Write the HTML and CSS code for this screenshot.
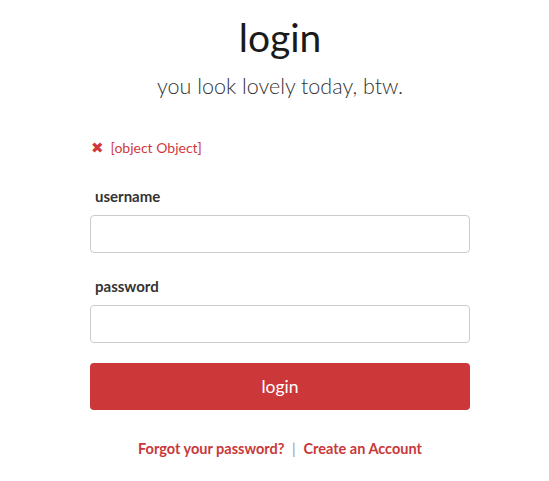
FILE: index.html
```html
<!DOCTYPE html>
<html lang="en">
<head>
    <meta charset="UTF-8">
    <meta name="viewport" content="width=device-width, initial-scale=1.0">
    <title>Login</title>
    <link rel="stylesheet" href="styles.css">
</head>
<body>
    <div class="page">
        <div class="login-box">
            <h1 class="title">login</h1>
            <p class="subtitle">you look lovely today, btw.</p>

            <div class="error">
                <span class="error-icon">&#10006;</span>
                <span>[object Object]</span>
            </div>

            <form class="login-form">
                <label for="username">username</label>
                <input type="text" id="username">

                <label for="password">password</label>
                <input type="password" id="password">

                <button type="submit">login</button>
            </form>

            <p class="links">
                <a href="#">Forgot your password?</a>
                <span class="sep">|</span>
                <a href="#">Create an Account</a>
            </p>
        </div>
    </div>
</body>
</html>
```

FILE: styles.css
```css
body {
    margin: 0;
    font-family: Lato, "Open Sans", sans-serif;
    color: #222;
    background: #fff;
}

.page {
    padding-left: 11px;
}

.login-box {
    width: 380px;
    margin: 0 auto;
}

.title {
    text-align: center;
    font-size: 39px;
    font-weight: 400;
    margin: 12px 0 0;
    line-height: 50px;
    color: #1a1a1a;
}

.subtitle {
    text-align: center;
    font-size: 21.5px;
    font-weight: 300;
    margin: 9px 0 0;
    line-height: 30px;
    color: #333;
}

.error {
    margin-top: 36px;
    color: #d0393b;
    font-size: 14px;
    line-height: 20px;
    padding-left: 1px;
}

.error-icon {
    font-size: 15px;
    margin-right: 3px;
}

.login-form {
    margin-top: 28px;
}

label {
    display: block;
    font-weight: bold;
    font-size: 15px;
    line-height: 20px;
    padding-left: 5px;
    color: #333;
    margin-bottom: 9px;
}

input[type="text"],
input[type="password"] {
    display: block;
    box-sizing: border-box;
    width: 100%;
    height: 38px;
    border: 1px solid #ccc;
    border-radius: 4px;
    margin-bottom: 23px;
    padding: 6px 12px;
    font-size: 15px;
}

button {
    display: block;
    width: 100%;
    height: 47px;
    margin-top: -3px;
    background-color: #cc3839;
    color: #fff;
    border: none;
    border-radius: 4px;
    font-family: inherit;
    font-size: 17.5px;
    cursor: pointer;
}

.links {
    text-align: center;
    margin: 29px 0 0;
    font-size: 14.5px;
    line-height: 20px;
}

.links a {
    color: #c9383a;
    font-weight: bold;
    text-decoration: none;
}

.sep {
    color: #999;
    margin: 0 4px;
}
```
